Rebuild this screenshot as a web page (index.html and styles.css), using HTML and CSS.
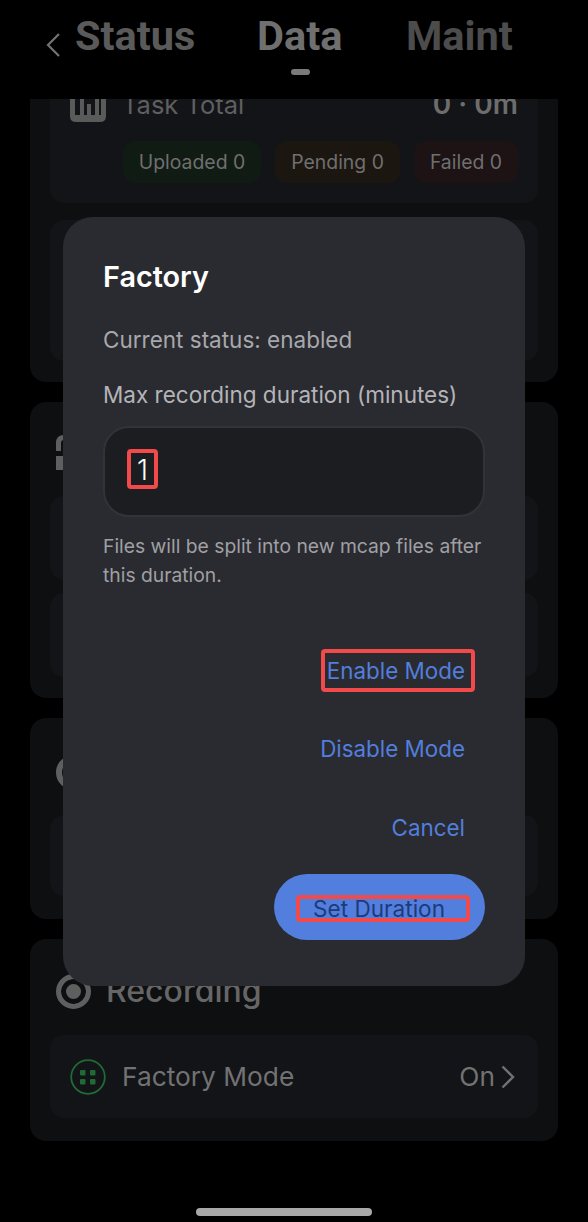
FILE: index.html
```html
<!DOCTYPE html>
<html lang="en">
<head>
<meta charset="utf-8">
<title>Data</title>
<link rel="stylesheet" href="styles.css">
</head>
<body>
<div class="screen">
  <header class="topbar">
    <svg class="back" width="16" height="26" viewBox="0 0 16 26"><path d="M14 2 L3 13 L14 24" fill="none" stroke="#737373" stroke-width="2.2"/></svg>
    <span class="tab tab-status">Status</span>
    <span class="tab tab-data">Data<i class="tab-dot"></i></span>
    <span class="tab tab-maint">Maint</span>
  </header>
  <main class="scroller">
    <section class="card card-a">
      <div class="inner inner-task">
        <div class="task-head">
          <svg class="task-icon" width="36" height="36" viewBox="0 0 36 36"><path d="M0 0 H5 V29 H10 V12 H14 V29 H17 V18 H21 V29 H25 V8 H29 V29 H31 V0 H36 V30 Q36 36 30 36 H6 Q0 36 0 30 Z" fill="#5a5a5a"/></svg>
          <span class="task-label">Task Total</span>
          <span class="task-val">0 · 0m</span>
        </div>
        <div class="chips">
          <span class="chip chip-g">Uploaded 0</span>
          <span class="chip chip-o">Pending 0</span>
          <span class="chip chip-r">Failed 0</span>
        </div>
      </div>
      <div class="inner inner-2"></div>
    </section>
    <section class="card card-b">
      <svg class="peek-lock" width="8" height="36" viewBox="0 0 8 36"><path d="M2.5 16 V8 Q2.5 2.5 8 2.5" fill="none" stroke="#5f5f5f" stroke-width="5"/><rect y="21" width="8" height="14" fill="#5f5f5f"/></svg>
      <div class="inner inner-3"></div>
      <div class="inner inner-3"></div>
    </section>
    <section class="card card-c">
      <div class="peek-ring"></div>
      <div class="inner inner-4"></div>
    </section>
    <section class="card card-d">
      <h2 class="rec-title"><span class="rec-icon"></span>Recording</h2>
      <div class="inner row">
        <svg class="fm-icon" width="36" height="36" viewBox="0 0 36 36"><circle cx="18" cy="18" r="16.8" fill="none" stroke="#1f6b33" stroke-width="1.8"/><g fill="#1f6b33"><rect x="10" y="11" width="5.5" height="5.5" rx="1"/><rect x="20" y="11" width="5.5" height="5.5" rx="1"/><rect x="10" y="20" width="5.5" height="5.5" rx="1"/><rect x="20" y="20" width="5.5" height="5.5" rx="1"/></g></svg>
        <span class="row-label">Factory Mode</span>
        <span class="row-val">On</span>
        <svg width="14" height="24" viewBox="0 0 14 24"><path d="M1.5 1.5 L12 12 L1.5 22.5" fill="none" stroke="#727272" stroke-width="2.4"/></svg>
      </div>
    </section>
  </main>
  <div class="home-bar"></div>
  <div class="dialog">
    <h1 class="dlg-title">Factory</h1>
    <p class="dlg-status">Current status: enabled</p>
    <p class="dlg-label">Max recording duration (minutes)</p>
    <div class="dlg-input"><span class="mark mark-one">1</span></div>
    <p class="dlg-help">Files will be split into new mcap files after this duration.</p>
    <div class="actions">
      <span class="act mark mark-enable">Enable Mode</span>
      <span class="act act-disable">Disable Mode</span>
      <span class="act act-cancel">Cancel</span>
      <span class="primary"><span class="mark mark-set">Set Duration</span></span>
    </div>
  </div>
</div>
</body>
</html>
```
FILE: styles.css
```css
* { box-sizing: border-box; }
html, body { margin: 0; padding: 0; background: #000; }
body { font-family: "Inter", "Liberation Sans", sans-serif; }
.screen { position: relative; width: 588px; height: 1222px; overflow: hidden; background: #000; }

.topbar { position: relative; height: 99px; background: #000; z-index: 2; }
.back { position: absolute; left: 45px; top: 32px; }
.tab { position: absolute; top: 14px; font-size: 41.5px; font-weight: 700; line-height: 44px; font-family: "Roboto", sans-serif; color: #555; }
.tab-status { left: 75px; color: #5a5a5a; }
.tab-data { left: 257px; color: #6f6f6f; }
.tab-maint { left: 406px; color: #4c4c4c; }
.tab-dot { position: absolute; left: 34px; top: 55px; width: 19px; height: 6px; border-radius: 3px; background: #7a7a7a; }

.scroller { display: flex; flex-direction: column; gap: 20px; padding: 0 30px; height: 1060px; overflow: hidden; }
.card { flex: none; background: #0e0f11; border-radius: 16px; padding: 0 20px; position: relative; }
.card-a { height: 313px; margin-top: -30px; }
.card-b { height: 296px; padding-top: 94px; }
.card-c { height: 201px; padding-top: 97px; }
.card-d { height: 202px; }
.inner { background: #121418; border-radius: 14px; }
.inner-task { height: 134px; padding: 11px 20px 0; }
.inner-2 { height: 141px; margin-top: 17px; }
.inner-3 { height: 84px; margin-bottom: 13px; }
.inner-4 { height: 81px; }

.task-head { display: flex; align-items: center; height: 48px; }
.task-icon { flex: none; margin-right: 16px; }
.task-label { font-size: 25.5px; color: #5f5f5f; }
.task-val { margin-left: auto; font-size: 28px; font-weight: 600; color: #6d6d6d; }
.chips { display: flex; justify-content: flex-end; gap: 14px; margin-top: 13px; }
.chip { height: 42px; line-height: 42px; padding: 0 16px; border-radius: 12px; font-size: 19.4px; color: #6f6f6f; white-space: nowrap; }
.chip-g { background: #101b14; }
.chip-o { background: #1c1610; }
.chip-r { background: #1d1214; }

.peek-lock { position: absolute; left: 26px; top: 33px; }
.peek-ring { position: absolute; left: 26px; top: 37px; width: 35px; height: 35px; border: 6px solid #5f5f5f; border-radius: 50%; }

.rec-title { margin: 0; height: 96px; display: flex; align-items: center; gap: 15px; font-size: 32px; font-weight: 500; line-height: 40px; color: #666; padding: 8px 0 0 6px; }
.rec-icon { width: 35px; height: 35px; border-radius: 50%; border: 5px solid #5f5f5f; background: #5f5f5f; box-shadow: inset 0 0 0 5px #0e0f11; flex: none; }
.row { height: 83px; display: flex; align-items: center; padding: 0 23px 0 20px; }
.row-label { font-size: 26.3px; color: #727272; margin-left: 16px; }
.row-val { margin-left: auto; font-size: 26.3px; color: #727272; margin-right: 6px; }

.home-bar { position: absolute; left: 196px; top: 1208px; width: 176px; height: 8px; border-radius: 4px; background: #a8a8a8; }

.dialog { position: absolute; left: 63px; top: 217px; width: 462px; height: 769px; background: #2a2b30; border-radius: 30px; padding: 40px; z-index: 3; color: #a8a8ac; }
.dlg-title { margin: 0; font-size: 28.8px; line-height: 40px; font-weight: 600; color: #fff; }
.dlg-status { margin: 28px 0 0; font-size: 22.5px; line-height: 30px; }
.dlg-label { margin: 25px 0 0; font-size: 22.5px; line-height: 30px; color: #b4b4b8; }
.dlg-input { margin-top: 16px; width: 382px; height: 91px; background: #1c1d21; border: 2px solid #323338; border-radius: 26px; display: flex; align-items: center; padding-left: 22px; }
.mark { border: 4px solid #f2494a; border-radius: 4px; }
.mark-one { width: 31px; height: 40px; margin-bottom: 5px; font-size: 28px; font-weight: 300; line-height: 34px; color: #fff; text-align: center; }
.dlg-help { margin: 15px 0 0; font-size: 19.3px; line-height: 29px; color: #a0a0a4; }
.actions { display: flex; flex-direction: column; align-items: flex-end; margin-top: 59px; }
.act { font-size: 22.4px; line-height: 34px; height: 34px; color: #527edd; margin-right: 20px; }
.mark-enable { height: 43px; margin: 0 10px 40px 0; padding: 0 6px 0 2px; line-height: 35px; }
.act-disable { margin-bottom: 45px; }
.act-cancel { margin-bottom: 29px; }
.primary { width: 211px; height: 66px; border-radius: 33px; background: #527edd; display: flex; align-items: center; justify-content: center; padding-left: 7px; }
.mark-set { width: 174px; height: 27px; margin-top: 3px; font-size: 22.6px; line-height: 19px; color: #1f3a7a; text-align: center; padding-right: 8px; white-space: nowrap; }
```
